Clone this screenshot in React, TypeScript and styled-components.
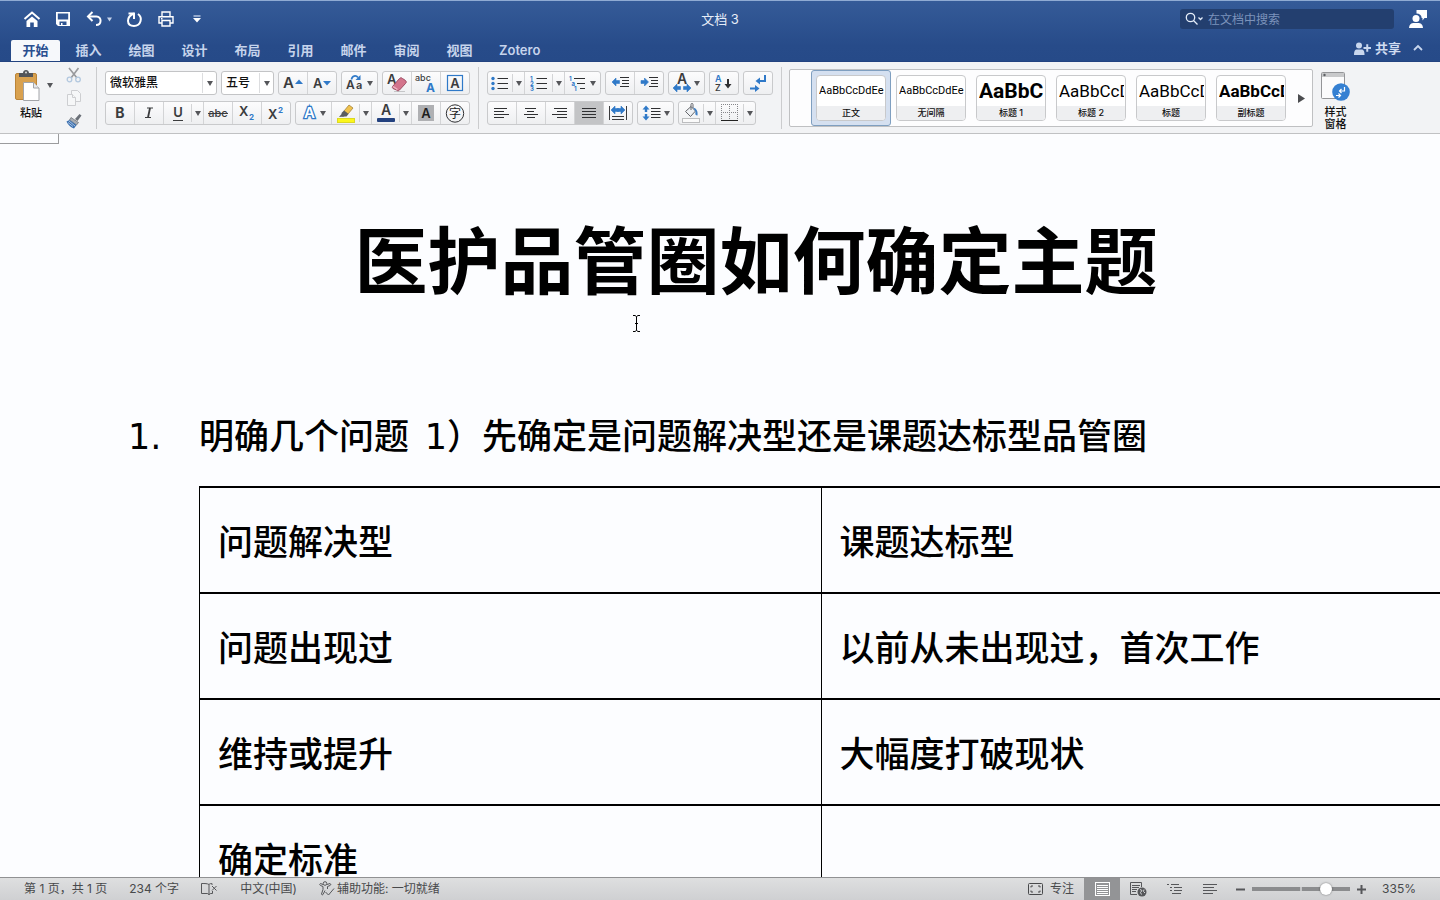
import React from "react";
import styled, { createGlobalStyle } from "styled-components";

const UI = `Inter, "Noto Sans CJK SC", sans-serif`;
const CJK = `"Noto Sans CJK SC", sans-serif`;
const INK = "#3b3c3e";
const BLUE = "#2f79c8";

const GlobalStyle = createGlobalStyle`
  *, *::before, *::after { box-sizing: border-box; }
  body { margin: 0; font-family: ${UI}; }
  button, select, input { font: inherit; color: inherit; margin: 0; padding: 0; }
  button { border: 0; background: none; cursor: pointer; }
  svg { display: block; flex: none; overflow: visible; }
  svg text { font-family: ${UI}; }
`;

const Window = styled.div`
  display: flex;
  flex-direction: column;
  height: 100vh;
  overflow: hidden;
  background: #fcfdff;
`;

/* ---------- Title bar and tabs ---------- */

const Header = styled.header`
  flex: none;
  border-top: 1px solid #8fabd3;
  border-bottom: 1px solid #234380;
  background: linear-gradient(#355b98, #274b89 75%, #264a88);
  color: #e6edf8;
`;

const TitleBar = styled.div`
  display: grid;
  grid-template-columns: 1fr auto 1fr;
  align-items: center;
  height: 38px;
  padding: 0 12px 2px;
`;

const QuickAccess = styled.div`
  display: flex;
  align-items: center;
  padding-left: 10px;
  color: #fff;
`;

const QuickButton = styled.button<{ $gap?: number }>`
  display: flex;
  align-items: center;
  gap: 4px;
  margin-right: ${(p) => p.$gap ?? 11}px;
`;

const DocTitle = styled.div`
  font-size: 13px;
  line-height: 20px;
`;

const TitleRight = styled.div`
  display: flex;
  justify-content: flex-end;
  align-items: center;
  gap: 15px;
`;

const SearchBox = styled.label`
  display: flex;
  align-items: center;
  gap: 4px;
  width: 214px;
  height: 20px;
  padding-left: 5px;
  border-radius: 3px;
  background: #233f6f;
`;

const SearchInput = styled.input`
  flex: 1;
  min-width: 0;
  border: 0;
  outline: 0;
  background: none;
  font-size: 12px;
  &::placeholder { color: #7c93bb; opacity: 1; }
`;

const IconButton = styled.button`
  display: flex;
  align-items: center;
  justify-content: center;
`;

const TabRow = styled.div`
  display: flex;
  justify-content: space-between;
  height: 22px;
  padding: 0 17px 0 11px;
`;

const Tabs = styled.nav`
  display: flex;
  gap: 4px;
  padding-top: 1px;
`;

const Tab = styled.button<{ $active?: boolean }>`
  min-width: 49px;
  padding: 0 11px;
  border-radius: 2px 2px 0 0;
  font-size: 13px;
  font-weight: 600;
  line-height: 19px;
  white-space: nowrap;
  color: ${(p) => (p.$active ? "#2a4f8f" : "#c6d4ec")};
  background: ${(p) => (p.$active ? "#f6f8fb" : "none")};
`;

const ShareArea = styled.div`
  display: flex;
  align-items: center;
  gap: 12px;
  padding-bottom: 4px;
`;

const ShareButton = styled.button`
  display: flex;
  align-items: center;
  gap: 3px;
  font-size: 13px;
  font-weight: 600;
  line-height: 18px;
  color: #d0dcf1;
`;

/* ---------- Ribbon ---------- */

const Ribbon = styled.div`
  display: flex;
  flex: none;
  height: 72px;
  padding: 5px 0 4px;
  border-bottom: 1px solid #c0c1c3;
  background: #f2f3f5;
  color: #111;
`;

const Section = styled.section`
  display: flex;
  flex: none;
  padding: 4px 8px 0;
  border-right: 1px solid #cbccce;
`;

const PasteSection = styled(Section)`
  width: 97px;
  padding: 0 0 0 15px;
`;

const BigButton = styled.button`
  display: flex;
  flex-direction: column;
  align-items: center;
  gap: 4px;
  font-size: 11px;
  font-weight: 500;
  line-height: 12px;
`;

const PasteButton = styled(BigButton)`
  align-items: flex-end;
  width: 32px;
  padding-right: 5px;
  gap: 6px;
`;

const PasteFace = styled.span`
  align-self: flex-start;
`;

const PasteColumn = styled.div`
  display: flex;
  align-items: flex-start;
  padding-top: 3px;
`;

const PasteArrow = styled.button`
  padding-top: 13px;
`;

const SmallTools = styled.div`
  display: flex;
  flex-direction: column;
  justify-content: space-between;
  margin-left: 13px;
`;

const Rows = styled.div`
  display: flex;
  flex-direction: column;
  gap: 6px;
`;

const Row = styled.div`
  display: flex;
  gap: 4px;
`;

const Group = styled.div`
  display: flex;
  height: 24px;
  border: 1px solid #c9cacc;
  border-radius: 3px;
  background: linear-gradient(#fcfcfd, #eeeff1);
`;

const Tool = styled.button<{ $w?: number; $active?: boolean }>`
  display: flex;
  align-items: center;
  justify-content: center;
  gap: 3px;
  width: ${(p) => p.$w ?? 28}px;
  background: ${(p) => (p.$active ? "#c3c4c6" : "none")};
`;

const Divider = styled.span`
  width: 1px;
  background: #d3d4d6;
`;

const SplitDivider = styled(Divider)`
  margin: 2px 0;
`;

const ArrowTool = styled.button`
  display: flex;
  align-items: center;
  justify-content: center;
  width: 11px;
`;

const Combo = styled.div<{ $w: number }>`
  display: flex;
  width: ${(p) => p.$w}px;
  height: 24px;
  border: 1px solid #c3c4c6;
  border-radius: 3px;
  background: #fff;
`;

const ComboSelect = styled.select`
  flex: 1;
  min-width: 0;
  padding: 0 0 2px 4px;
  border: 0;
  outline: 0;
  appearance: none;
  background: none;
  font-size: 12px;
  font-weight: 500;
  color: #111;
`;

const ComboArrow = styled.span`
  display: flex;
  align-items: center;
  justify-content: center;
  width: 14px;
  margin: 1px 0;
  border-left: 1px solid #dcdddf;
`;

/* ---------- Style gallery ---------- */

const GallerySection = styled.section`
  display: flex;
  padding: 2px 0 0 7px;
`;

const Gallery = styled.div`
  display: flex;
  height: 58px;
  padding-left: 21px;
  border: 1px solid #bfc0c2;
  border-radius: 2px;
  background: #fdfdfe;
`;

const StyleCard = styled.button<{ $active?: boolean }>`
  width: 80px;
  height: 56px;
  padding: 4px;
  border: 1px solid ${(p) => (p.$active ? "#7f9fc0" : "transparent")};
  border-radius: 3px;
  background: ${(p) => (p.$active ? "#d5e0f0" : "none")};
`;

const CardFace = styled.span`
  display: flex;
  flex-direction: column;
  height: 46px;
  border: 1px solid #c8c9cb;
  border-radius: 4px;
  background: #fff;
  overflow: hidden;
`;

const Sample = styled.span<{ $size: number; $bold?: boolean }>`
  flex: 1;
  margin: 0 1px 0 2px;
  overflow: hidden;
  text-align: left;
  white-space: nowrap;
  font-family: Roboto, sans-serif;
  font-size: ${(p) => p.$size}px;
  font-weight: ${(p) => (p.$bold ? 700 : 400)};
  line-height: 30px;
  color: #000;
`;

const CardName = styled.span`
  height: 14px;
  background: #eeeff1;
  font-size: 9px;
  font-weight: 500;
  line-height: 13px;
`;

const GalleryNext = styled.button`
  display: flex;
  align-items: center;
  justify-content: center;
  width: 21px;
`;

const PaneButton = styled(BigButton)`
  margin-left: 8px;
  align-self: flex-start;
  padding-top: 2px;
`;

/* ---------- Document ---------- */

const Document = styled.main`
  position: relative;
  flex: 1;
  min-height: 0;
  overflow: hidden;
  padding-left: 72px;
  color: #000;
  font-family: ${CJK};
`;

const PageCorner = styled.div`
  width: 59px;
  height: 10px;
  margin-left: -72px;
  border: solid #9b9c9e;
  border-width: 0 1px 1px 0;
`;

const Heading = styled.h1`
  margin: 62px 0 0;
  text-align: center;
  font-size: 73px;
  font-weight: 700;
  line-height: 100px;
`;

const ListLine = styled.p`
  display: flex;
  height: 60px;
  margin: 98px 0 0;
  padding-left: 56px;
  font-size: 35px;
  font-weight: 500;
  line-height: 60px;
  white-space: pre;
`;

const Numeral = styled.span`
  font-family: "DejaVu Sans", sans-serif;
  font-weight: 400;
  line-height: 1;
`;

const Marker = styled.span`
  width: 71px;
`;

const Table = styled.table`
  width: calc(100% - 124px);
  margin: 22px -4px 0 127px;
  table-layout: fixed;
  border-collapse: collapse;
  font-size: 35px;
  font-weight: 500;
  line-height: 60px;
`;

const Cell = styled.td`
  height: 106px;
  padding: 0 18px;
  border: solid #000;
  border-width: 2px 1px;
`;

const TextCursor = styled.svg`
  position: absolute;
  left: 632px;
  top: 181px;
`;

/* ---------- Status bar ---------- */

const StatusBar = styled.footer`
  display: flex;
  flex: none;
  justify-content: space-between;
  height: 23px;
  padding: 0 24px;
  border-top: 1px solid #909193;
  background: linear-gradient(#dedfe0, #cfd0d2);
  font-size: 12px;
  line-height: 22px;
  color: #48494b;
  white-space: nowrap;
`;

const StatusGroup = styled.div`
  display: flex;
  align-items: center;
`;

const StatusItem = styled.button<{ $gap?: number; $inner?: number }>`
  display: flex;
  align-items: center;
  gap: ${(p) => p.$inner ?? 2}px;
  margin-right: ${(p) => p.$gap ?? 22}px;
`;

const ViewButton = styled.button<{ $active?: boolean }>`
  display: flex;
  align-items: center;
  justify-content: center;
  width: 36px;
  height: 22px;
  background: ${(p) => (p.$active ? "#939496" : "none")};
`;

const ZoomArea = styled.div`
  display: flex;
  align-items: center;
  margin-left: 4px;
`;

const ZoomButton = styled.button`
  display: flex;
  padding: 4px;
`;

const ZoomSlider = styled.input`
  width: 98px;
  height: 14px;
  margin: 0 3px;
  appearance: none;
  background: linear-gradient(90deg, transparent 48px, #c4c5c7 48px 50px, transparent 50px) center / 98px 4px no-repeat,
    linear-gradient(#8b8c8e, #8b8c8e) center / 98px 4px no-repeat;
  &::-webkit-slider-thumb {
    appearance: none;
    width: 12px;
    height: 12px;
    border-radius: 50%;
    background: #fff;
    box-shadow: 0 0 2px rgba(0, 0, 0, 0.5);
  }
`;

const ZoomValue = styled.span`
  margin-left: 12px;
`;

/* ---------- Icons ---------- */

const Down = ({ color = "#55565a", size = 6 }: { color?: string; size?: number }) => (
  <svg width={size} height="5" viewBox="0 0 6 5">
    <path d="M0 0h6L3 5z" fill={color} />
  </svg>
);

const Lines = ({ rows, width = 16 }: { rows: [number, number][]; width?: number }) => (
  <svg width={width} height="14" viewBox={`0 0 ${width} 14`}>
    {rows.map(([x, w], i) => (
      <path key={i} d={`M${x} ${i * 3 + 2}.5h${w}`} stroke="#2f3032" />
    ))}
  </svg>
);

const ArrowL = ({ x, y }: { x: number; y: number }) => (
  <path transform={`translate(${x} ${y})`} d="M0 4l4-4v2.500h3.500v3H4V8z" fill={BLUE} stroke={BLUE} strokeWidth=".6" />
);
const ArrowR = ({ x, y }: { x: number; y: number }) => (
  <path transform={`translate(${x} ${y})`} d="M7.500 4l-4-4v2.500H0v3h3.500V8z" fill={BLUE} stroke={BLUE} strokeWidth=".6" />
);

const HomeIcon = () => (
  <svg width="20" height="18" viewBox="0 0 20 18" fill="none">
    <path d="M2.500 9L10 2.500 17.500 9" stroke="#fff" strokeWidth="2" />
    <path d="M4.500 11L10 6.500l5.500 4.500V17H11.800v-4.500H8.200V17H4.500z" fill="#fff" />
  </svg>
);
const SaveIcon = () => (
  <svg width="16" height="16" viewBox="0 0 16 16">
    <path
      fill="#fff"
      fillRule="evenodd"
      d="M1 1h14v14H3l-2-2zM2.800 2.500v6h10.400v-6zM4.500 10.500V14H6v-2h1.500v2h4v-3.500z"
    />
  </svg>
);
const UndoIcon = () => (
  <svg width="17" height="16" viewBox="0 0 17 16" fill="none" stroke="#fff" strokeWidth="2">
    <path d="M6.500 1L2 5.500 6.500 10" />
    <path d="M2 5.500h8.500c5.500 0 5.500 8.500-.5 8.500" />
  </svg>
);
const RedoIcon = () => (
  <svg width="17" height="17" viewBox="0 0 17 17" fill="none" stroke="#fff" strokeWidth="2">
    <path d="M2.500 2.500H8V8" />
    <path d="M8 2.500C-.500 6 .5 15 8 15c7 0 9-8.500 4-12" />
  </svg>
);
const PrintIcon = () => (
  <svg width="16" height="16" viewBox="0 0 16 16" fill="none" stroke="#fff" strokeWidth="1.400">
    <path d="M4 5.500V1h8v4.500M4 12H1V5.700h14V12h-3" />
    <path d="M4 9.500h8V15H4z" />
    <path d="M3 7.700h1.500" />
  </svg>
);
const CustomizeIcon = () => (
  <svg width="8" height="8" viewBox="0 0 8 8">
    <path d="M.5 1h7" stroke="#d7e1f2" strokeWidth="1.200" />
    <path d="M0 3h8L4 7.500z" fill="#fff" />
  </svg>
);
const SearchIcon = () => (
  <svg width="19" height="14" viewBox="0 0 19 14" fill="none" stroke="#e4ecf8" strokeWidth="1.300">
    <circle cx="5.500" cy="5.500" r="4.200" />
    <path d="M8.500 8.500l4 4M13.500 5.500l2 2 2-2" />
  </svg>
);
const UserIcon = () => (
  <svg width="19" height="19" viewBox="0 0 19 19" fill="#fff">
    <path d="M7.500 0H18v8h-2.500L13.500 10.500V8h-.8C12.500 5 10.500 3.500 7.500 3.500z" />
    <circle cx="7" cy="8.500" r="3.500" />
    <path d="M0 18c.3-4 2.500-5 5-5h4c2.500 0 4.700 1 5 5z" />
  </svg>
);
const ShareIcon = () => (
  <svg width="18" height="14" viewBox="0 0 18 14" fill="#c9d7ee">
    <circle cx="5" cy="4.500" r="3" />
    <path d="M0 14c0-4 1-5.500 3-5.500h4.500c2 0 3 1.500 3 5.500z" />
    <path d="M9.500 7h7.500M13.250 3.200v7.600" stroke="#c9d7ee" strokeWidth="2" />
  </svg>
);
const ChevronUp = () => (
  <svg width="10" height="6" viewBox="0 0 10 6" fill="none" stroke="#c9d7ee" strokeWidth="1.800">
    <path d="M1 5l4-4 4 4" />
  </svg>
);

const PasteIcon = () => (
  <svg width="25" height="31" viewBox="0 0 25 31">
    <rect x=".5" y="3.500" width="21" height="26" rx="1.500" fill="#d9a14f" stroke="#bb8438" />
    <path d="M4 3h4c0-4 6-4 6 0h4v4H4z" fill="#54565a" />
    <circle cx="11" cy="2.500" r="1" fill="#dcdcdc" />
    <path d="M8.500 12.500h10l5.500 5.500v12.500H8.500z" fill="#fff" stroke="#a2a4a8" />
    <path d="M18.500 12.500V18H24" fill="#e8e9eb" stroke="#a2a4a8" />
  </svg>
);
const CutIcon = () => (
  <svg width="16" height="16" viewBox="0 0 16 16" fill="none">
    <path d="M3 1l8 10M12.500 1L5 11" stroke="#98999c" strokeWidth="1.600" />
    <circle cx="3.500" cy="12.500" r="2.300" stroke="#b3c8df" strokeWidth="1.300" />
    <circle cx="12" cy="12.500" r="2.300" stroke="#b3c8df" strokeWidth="1.300" />
  </svg>
);
const CopyIcon = () => (
  <svg width="16" height="16" viewBox="0 0 16 16" fill="#f6f7f8" stroke="#cdced1">
    <path d="M5.500.5h6l3 3v8h-9z" />
    <path d="M1.500 4.500h5l3 3v8h-8z" />
    <path d="M6.500 4.500v3h3" />
  </svg>
);
const BrushIcon = () => (
  <svg width="16" height="16" viewBox="0 0 16 16">
    <path d="M9 6l4.500-5 2 1.500L11.500 8z" fill="#6b7078" />
    <path d="M5 4.500l7.500 5-2 2.500L3.500 7z" fill="#a9adb3" stroke="#565a60" strokeWidth=".6" />
    <path d="M3.500 7l7 5-2.500 3.500C5 14.500 2 12 .5 8.500z" fill="#3a6fb0" />
    <path d="M3 8l6 5M2 9.500l5 4" stroke="#dbe6f3" strokeWidth=".7" />
  </svg>
);

const Glyph = ({
  text, size = 15, weight = 600, w = 16, y = 14, x, color = INK, children,
}: {
  text: string; size?: number; weight?: number; w?: number; y?: number; x?: number;
  color?: string; children?: React.ReactNode;
}) => (
  <svg width={w} height="20" viewBox={`0 0 ${w} 20`}>
    <text
      x={x ?? w / 2}
      y={y}
      textAnchor={x === undefined ? "middle" : "start"}
      fontSize={size}
      fontWeight={weight}
      fill={color}
    >
      {text}
    </text>
    {children}
  </svg>
);

const ItalicIcon = () => (
  <svg width="12" height="20" viewBox="0 0 12 20" fill="none" stroke={INK}>
    <path d="M4 5h6M2 14.500h6" strokeWidth="1.200" />
    <path d="M7 5L5 14.500" strokeWidth="1.800" />
  </svg>
);
const ChangeCaseIcon = () => (
  <svg width="18" height="20" viewBox="0 0 18 20">
    <text x="0" y="16" fontSize="12" fontWeight="600" fill={INK}>A</text>
    <text x="10" y="16" fontSize="11" fontWeight="600" fill={INK}>a</text>
    <path d="M5.500 6.500C6 2.500 10 2 12 4.500" fill="none" stroke={BLUE} strokeWidth="1.800" />
    <path d="M9.500 7h5V2z" fill={BLUE} />
  </svg>
);
const EraserIcon = () => (
  <Glyph text="A" size={13} w={22} x={1} y={11}>
    <path d="M8 18.500h11" stroke="#c5c6c8" />
    <path d="M6.500 13.500l7-8c1-1 2-1 3 0l3 2c1 1 1 2 0 3l-6 6.500c-1 1-2 1-3 0L7 15.500c-.8-.6-.8-1.300-.5-2z" fill="#d3748c" stroke="#9d4d63" />
    <path d="M7 13.500l4.500 3" stroke="#efb6c3" strokeWidth="1.500" />
  </Glyph>
);
const PhoneticIcon = () => (
  <svg width="22" height="20" viewBox="0 0 22 20">
    <text x="0" y="8" fontSize="9" fontWeight="500" fill={INK}>abc</text>
    <text x="11" y="19" fontSize="12" fontWeight="700" fill={BLUE}>A</text>
  </svg>
);
const BorderAIcon = () => (
  <Glyph text="A" size={13} y={15}>
    <rect x=".5" y="2.500" width="15" height="15" fill="none" stroke={BLUE} strokeWidth="1.200" />
  </Glyph>
);
const OutlineAIcon = () => (
  <svg width="15" height="20" viewBox="0 0 15 20">
    <text x="7.500" y="15" textAnchor="middle" fontSize="15" fontWeight="600" fill="#fff" stroke={BLUE} strokeWidth="2.600" paintOrder="stroke">A</text>
  </svg>
);
const HighlightIcon = () => (
  <svg width="20" height="20" viewBox="0 0 20 20">
    <path d="M8 8l5-6 4 3-5 6z" fill="#f0c24d" stroke="#a5843a" strokeWidth=".8" />
    <path d="M5.500 10L8 7.500l4.500 3.500-2 2.500H6z" fill="#5a5c60" />
    <path d="M3 14l2.500-3 3 2.500z" fill="#5a5c60" />
    <rect x="1.500" y="15.500" width="17" height="4" fill="#fbf61c" stroke="#dcd823" />
  </svg>
);
const FontColorIcon = () => (
  <Glyph text="A" size={14} w={18} y={12}>
    <rect x="0" y="15" width="18" height="4" rx="1" fill="#23417f" />
  </Glyph>
);
const ShadedAIcon = () => (
  <svg width="16" height="20" viewBox="0 0 16 20">
    <rect x="0" y="2" width="16" height="16" fill="#afb0b3" />
    <text x="8" y="15" textAnchor="middle" fontSize="13" fontWeight="600" fill="#1d1e20">A</text>
  </svg>
);
const CircledIcon = () => (
  <Glyph text="字" size={12} w={20} weight={400} y={15} color="#202124">
    <circle cx="10" cy="10.500" r="8.700" fill="none" stroke="#303134" />
  </Glyph>
);

const BulletsIcon = () => (
  <svg width="18" height="15" viewBox="0 0 18 15">
    {[2, 7, 12].map((y) => (
      <g key={y}>
        <circle cx="2" cy={y + 0.5} r="1.700" fill={BLUE} />
        <path d={`M6.500 ${y + 0.5}H17`} stroke="#2f3032" />
      </g>
    ))}
  </svg>
);
const NumbersIcon = () => (
  <svg width="18" height="17" viewBox="0 0 18 17">
    {[3, 8, 13].map((y, i) => (
      <g key={y}>
        <text x="0" y={y + 2.500} fontSize="6" fontWeight="700" fill={BLUE}>{i + 1}</text>
        <path d={`M6.500 ${y + 0.5}H17`} stroke="#2f3032" />
      </g>
    ))}
  </svg>
);
const MultiIcon = () => (
  <svg width="18" height="17" viewBox="0 0 18 17">
    {["1", "a", "1"].map((t, i) => (
      <g key={i}>
        <text x={i * 2.500} y={i * 5 + 5.500} fontSize="6" fontWeight="700" fill={BLUE}>{t}</text>
        <path d={`M${i * 3 + 5} ${i * 5 + 3.500}H16`} stroke="#2f3032" />
      </g>
    ))}
  </svg>
);
const IndentIcon = ({ right }: { right?: boolean }) => (
  <svg width="18" height="14" viewBox="0 0 18 14">
    <path d="M9 1.500h9M11 4.500h7M11 7.500h7M9 10.500h9" stroke="#2f3032" />
    {right ? <ArrowR x={1} y={2} /> : <ArrowL x={1} y={2} />}
  </svg>
);
const AsianIcon = () => (
  <Glyph text="A" size={14} w={18} y={11}>
    <ArrowL x={0} y={11} />
    <ArrowR x={10.500} y={11} />
  </Glyph>
);
const SortIcon = () => (
  <svg width="18" height="20" viewBox="0 0 18 20">
    <text x="0" y="9" fontSize="9" fontWeight="600" fill={BLUE}>A</text>
    <text x="0" y="18" fontSize="9" fontWeight="500" fill={INK}>Z</text>
    <path d="M12 6h2v5h2.500L13 15.500 9.500 11H12z" fill="#2f3032" />
  </svg>
);
const MarksIcon = () => (
  <svg width="18" height="20" viewBox="0 0 18 20">
    <path d="M16 2v6H10" fill="none" stroke={BLUE} strokeWidth="2" />
    <path d="M6.500 8L11 4.500v7z" fill={BLUE} />
    <path d="M1 15.500h6" stroke={BLUE} strokeWidth="2" />
    <path d="M10.500 15.500L6 12v7z" fill={BLUE} />
  </svg>
);
const DistributeIcon = () => (
  <svg width="20" height="18" viewBox="0 0 20 18">
    <path d="M1.500 2v14M18.500 2v14M4 12.500h12M4 15.500h12" stroke="#3a3b3d" />
    <ArrowL x={3} y={2} />
    <ArrowR x={9.500} y={2} />
  </svg>
);
const SpacingIcon = () => (
  <svg width="19" height="16" viewBox="0 0 19 16">
    <path d="M9 3.500h9.500M9 6.500h9.500M9 9.500h9.500M9 12.500h9.500" stroke="#2f3032" />
    <path d="M4 .500L7.500 4.500H5.200V7H2.800V4.500H.500zM4 15.500L.500 11.500h2.300V9h2.400v2.500h2.300z" fill={BLUE} />
  </svg>
);
const BucketIcon = () => (
  <svg width="18" height="20" viewBox="0 0 18 20">
    <path d="M3.500 8.500L9 3.500l4.500 4.500-5 5.500z" fill="#eef0f3" stroke="#64676c" />
    <path d="M9 7V1.500c0-1.500 2-1.500 2 0V5" fill="none" stroke="#64676c" />
    <path d="M11 4.500c4 1 5 4 4.500 8-2 0-2.500-1-2-4z" fill="#3f7fc4" />
    <rect x=".5" y="15.500" width="17" height="4" fill="#fafafa" stroke="#bcbdbf" />
  </svg>
);
const TableBorderIcon = () => (
  <svg width="18" height="18" viewBox="0 0 18 18" fill="none">
    <path d="M0 .5h17M0 8.500h17M.5 0v16M8.500 0v16M16.500 0v16" stroke="#85868a" strokeDasharray="1 1" />
    <path d="M0 16.500h17" stroke="#222" />
  </svg>
);
const PaneIcon = () => (
  <svg width="29" height="31" viewBox="0 0 29 31">
    <rect x=".5" y="1.500" width="23" height="26" rx="1" fill="#fbfbfc" stroke="#949598" />
    <rect x="1" y="2" width="22" height="4" fill="#c8c9cb" />
    <circle cx="3.500" cy="4" r="1.200" fill="#5d5f63" />
    <circle cx="20" cy="21" r="8.800" fill="#3580d2" />
    <path d="M23.500 16v4H18.500M20.500 18L18.500 20l2 2M15 24.500h4.500M17.500 22.500l2 2-2 2" fill="none" stroke="#fff" strokeWidth="1.200" />
  </svg>
);

const ProofIcon = () => (
  <svg width="17" height="14" viewBox="0 0 17 14" fill="none" stroke="#56575a">
    <path d="M8 2.500C6.500 1.500 4 1.500.5 1.500v10H6c1 0 2 .5 2 1.500zM8 2.500C9 1.500 10 1.500 11 1.500V3M8 13c0-1 1-1.500 2-1.500h1.500V9" />
    <path d="M11 4l4.500 4.500M15.500 4L11 8.500" />
  </svg>
);
const AccessIcon = () => (
  <svg width="16" height="16" viewBox="0 0 16 16" fill="none" stroke="#56575a">
    <circle cx="6" cy="2.500" r="1.800" />
    <path d="M4 3.500L1.500 2.500C.5 3 .5 4 1.500 4.500L4 5.500v3L2.500 13c.3 1.300 1.500 1 1.800 0L6 9.500M8 3.500l3-1c1 .5 1 1.500 0 2L8.500 5.500V8" />
    <path d="M6.500 11l3 3 5.500-6.500" />
  </svg>
);
const FocusIcon = () => (
  <svg width="15" height="12" viewBox="0 0 15 12" fill="none" stroke="#48494b">
    <rect x=".5" y=".5" width="14" height="11" rx="1" />
    <path d="M3 4.500V3h2M10 3h2v1.500M3 7.500V9h2M10 9h2V7.500" />
  </svg>
);
const PrintLayoutIcon = () => (
  <svg width="15" height="14" viewBox="0 0 15 14" fill="none" stroke="#fff">
    <rect x=".5" y=".5" width="14" height="13" />
    <path d="M2 3.500h11M2 5.500h11M2 7.500h11M2 9.500h11M2 11.500h11" />
  </svg>
);
const WebLayoutIcon = () => (
  <svg width="17" height="15" viewBox="0 0 17 15" fill="none" stroke="#56575a">
    <path d="M7 12.500H.5V.5h11V5M2 3.500h8M2 5.500h7M2 7.500h5M2 9.500h4" />
    <circle cx="12" cy="10" r="4.500" fill="#56575a" stroke="none" />
    <path d="M10 7.500l2 1-1.500 2 1 2M14 7.500l-.5 2 1.500 1.500" stroke="#d6d7d9" />
  </svg>
);
const OutlineIcon = () => (
  <svg width="15" height="12" viewBox="0 0 15 12" stroke="#56575a">
    <path d="M0 1.500h2M4 1.500h8M3 4.500h2M7 4.500h8M3 7.500h2M7 7.500h8M5 10.500h9" />
  </svg>
);
const DraftIcon = () => (
  <svg width="14" height="12" viewBox="0 0 14 12" stroke="#56575a">
    <path d="M0 1.500h14M0 4.500h11M0 7.500h14M0 10.500h10" />
  </svg>
);

/* ---------- Composite controls ---------- */

const SplitTool = ({ label, w, children }: { label: string; w: number; children: React.ReactNode }) => (
  <>
    <Tool $w={w} aria-label={label}>{children}</Tool>
    <SplitDivider />
    <ArrowTool aria-label={`${label}选项`}><Down /></ArrowTool>
  </>
);

const ComboBox = ({ label, w, value }: { label: string; w: number; value: string }) => (
  <Combo $w={w}>
    <ComboSelect aria-label={label} defaultValue={value}>
      <option>{value}</option>
    </ComboSelect>
    <ComboArrow><Down /></ComboArrow>
  </Combo>
);

const tabs = ["开始", "插入", "绘图", "设计", "布局", "引用", "邮件", "审阅", "视图", "Zotero"];

const styles = [
  { name: "正文", sample: "AaBbCcDdEe", size: 11 },
  { name: "无间隔", sample: "AaBbCcDdEe", size: 11 },
  { name: "标题 1", sample: "AaBbC", size: 21, bold: true },
  { name: "标题 2", sample: "AaBbCcD", size: 17 },
  { name: "标题", sample: "AaBbCcD", size: 17 },
  { name: "副标题", sample: "AaBbCcD", size: 17, bold: true },
];

const rows = [
  ["问题解决型", "课题达标型"],
  ["问题出现过", "以前从未出现过，首次工作"],
  ["维持或提升", "大幅度打破现状"],
  ["确定标准", ""],
];

export default function App() {
  return (
    <Window>
      <GlobalStyle />
      <Header>
        <TitleBar>
          <QuickAccess>
            <QuickButton aria-label="主页" $gap={13}><HomeIcon /></QuickButton>
            <QuickButton aria-label="保存" $gap={15}><SaveIcon /></QuickButton>
            <QuickButton aria-label="撤消" $gap={14}><UndoIcon /><Down color="#c6d3ea" size={5} /></QuickButton>
            <QuickButton aria-label="恢复" $gap={15}><RedoIcon /></QuickButton>
            <QuickButton aria-label="打印" $gap={19}><PrintIcon /></QuickButton>
            <QuickButton aria-label="自定义工具栏"><CustomizeIcon /></QuickButton>
          </QuickAccess>
          <DocTitle>文档 3</DocTitle>
          <TitleRight>
            <SearchBox>
              <SearchIcon />
              <SearchInput aria-label="搜索" placeholder="在文档中搜索" />
            </SearchBox>
            <IconButton aria-label="账户"><UserIcon /></IconButton>
          </TitleRight>
        </TitleBar>
        <TabRow>
          <Tabs>
            {tabs.map((t, i) => (
              <Tab key={t} $active={i === 0}>{t}</Tab>
            ))}
          </Tabs>
          <ShareArea>
            <ShareButton><ShareIcon />共享</ShareButton>
            <IconButton aria-label="折叠功能区"><ChevronUp /></IconButton>
          </ShareArea>
        </TabRow>
      </Header>

      <Ribbon>
        <PasteSection>
          <PasteColumn>
            <PasteButton><PasteFace><PasteIcon /></PasteFace>粘贴</PasteButton>
            <PasteArrow aria-label="粘贴选项"><Down /></PasteArrow>
          </PasteColumn>
          <SmallTools>
            <IconButton aria-label="剪切"><CutIcon /></IconButton>
            <IconButton aria-label="复制"><CopyIcon /></IconButton>
            <IconButton aria-label="格式刷"><BrushIcon /></IconButton>
          </SmallTools>
        </PasteSection>

        <Section>
          <Rows>
            <Row>
              <ComboBox label="字体" w={112} value="微软雅黑" />
              <ComboBox label="字号" w={53} value="五号" />
              <Group>
                <Tool aria-label="增大字号">
                  <Glyph text="A" size={15} w={20} x={0} y={15}><path d="M12 11h8l-4-4.500z" fill={BLUE} /></Glyph>
                </Tool>
                <Divider />
                <Tool aria-label="减小字号">
                  <Glyph text="A" size={13} w={18} x={0} y={15}><path d="M10 8h8l-4 4.500z" fill={BLUE} /></Glyph>
                </Tool>
              </Group>
              <Group>
                <Tool $w={35} aria-label="更改大小写"><ChangeCaseIcon /><Down /></Tool>
              </Group>
              <Group>
                <Tool aria-label="清除格式"><EraserIcon /></Tool>
                <Divider />
                <Tool aria-label="拼音指南"><PhoneticIcon /></Tool>
                <Divider />
                <Tool aria-label="字符边框"><BorderAIcon /></Tool>
              </Group>
            </Row>
            <Row>
              <Group>
                <Tool aria-label="加粗"><Glyph text="B" size={14} weight={700} y={15} /></Tool>
                <Divider />
                <Tool aria-label="倾斜"><ItalicIcon /></Tool>
                <Divider />
                <SplitTool label="下划线" w={27}>
                  <Glyph text="U" size={13} y={14}><path d="M3 17.500h10" stroke={INK} /></Glyph>
                </SplitTool>
                <Divider />
                <Tool aria-label="删除线">
                  <Glyph text="abc" size={11} weight={500} w={22} y={14}><path d="M1 10.500h20" stroke={INK} /></Glyph>
                </Tool>
                <Divider />
                <Tool aria-label="下标">
                  <Glyph text="X" size={13} w={18} x={1} y={13}>
                    <text x="11" y="17" fontSize="8" fontWeight="700" fill={BLUE}>2</text>
                  </Glyph>
                </Tool>
                <Divider />
                <Tool aria-label="上标">
                  <Glyph text="X" size={13} w={18} x={1} y={16}>
                    <text x="11" y="10" fontSize="8" fontWeight="700" fill={BLUE}>2</text>
                  </Glyph>
                </Tool>
              </Group>
              <Group>
                <Tool $w={35} aria-label="文本效果"><OutlineAIcon /><Down /></Tool>
                <Divider />
                <SplitTool label="突出显示" w={27}><HighlightIcon /></SplitTool>
                <Divider />
                <SplitTool label="字体颜色" w={27}><FontColorIcon /></SplitTool>
                <Divider />
                <Tool aria-label="字符底纹"><ShadedAIcon /></Tool>
                <Divider />
                <Tool aria-label="带圈字符"><CircledIcon /></Tool>
              </Group>
            </Row>
          </Rows>
        </Section>

        <Section>
          <Rows>
            <Row>
              <Group>
                <SplitTool label="项目符号" w={24}><BulletsIcon /></SplitTool>
                <Divider />
                <SplitTool label="编号" w={27}><NumbersIcon /></SplitTool>
                <Divider />
                <Tool $w={35} aria-label="多级列表"><MultiIcon /><Down /></Tool>
              </Group>
              <Group>
                <Tool aria-label="减少缩进"><IndentIcon /></Tool>
                <Divider />
                <Tool aria-label="增加缩进"><IndentIcon right /></Tool>
              </Group>
              <Group>
                <Tool $w={35} aria-label="中文版式"><AsianIcon /><Down /></Tool>
              </Group>
              <Group><Tool aria-label="排序"><SortIcon /></Tool></Group>
              <Group><Tool aria-label="显示编辑标记"><MarksIcon /></Tool></Group>
            </Row>
            <Row>
              <Group>
                <Tool aria-label="左对齐"><Lines rows={[[0, 13], [0, 10], [0, 15], [0, 10]]} /></Tool>
                <Divider />
                <Tool aria-label="居中"><Lines rows={[[2, 11], [4, 7], [1, 14], [4, 8]]} /></Tool>
                <Divider />
                <Tool aria-label="右对齐"><Lines rows={[[2, 13], [5, 10], [0, 15], [5, 10]]} /></Tool>
                <Divider />
                <Tool $active aria-label="两端对齐"><Lines rows={[[1, 14], [1, 14], [1, 14], [1, 14]]} /></Tool>
                <Divider />
                <Tool aria-label="分散对齐"><DistributeIcon /></Tool>
              </Group>
              <Group>
                <Tool $w={35} aria-label="行距"><SpacingIcon /><Down /></Tool>
              </Group>
              <Group>
                <SplitTool label="底纹" w={24}><BucketIcon /></SplitTool>
                <Divider />
                <SplitTool label="边框" w={27}><TableBorderIcon /></SplitTool>
              </Group>
            </Row>
          </Rows>
        </Section>

        <GallerySection>
          <Gallery>
            {styles.map((s, i) => (
              <StyleCard key={s.name} $active={i === 0}>
                <CardFace>
                  <Sample $size={s.size} $bold={s.bold}>{s.sample}</Sample>
                  <CardName>{s.name}</CardName>
                </CardFace>
              </StyleCard>
            ))}
            <GalleryNext aria-label="更多样式">
              <svg width="7" height="9" viewBox="0 0 7 9"><path d="M0 0l7 4.500L0 9z" fill="#4c4d50" /></svg>
            </GalleryNext>
          </Gallery>
          <PaneButton><PaneIcon /><span>样式<br />窗格</span></PaneButton>
        </GallerySection>
      </Ribbon>

      <Document>
        <PageCorner />
        <Heading>医护品管圈如何确定主题</Heading>
        <ListLine>
          <Marker><Numeral>1.</Numeral></Marker>
          <span>明确几个问题{"  "}<Numeral>1</Numeral>）先确定是问题解决型还是课题达标型品管圈</span>
        </ListLine>
        <Table>
          <tbody>
            {rows.map(([a, b]) => (
              <tr key={a}>
                <Cell>{a}</Cell>
                <Cell>{b}</Cell>
              </tr>
            ))}
          </tbody>
        </Table>
        <TextCursor width="9" height="17" viewBox="0 0 9 17" fill="none" stroke="#000">
          <path d="M1 .5h2l1.500 1 1.500-1h2M4.500 1.500v14M1 16.500h2l1.500-1 1.500 1h2M3 8.500h3" />
        </TextCursor>
      </Document>

      <StatusBar>
        <StatusGroup>
          <StatusItem>第 1 页，共 1 页</StatusItem>
          <StatusItem>234 个字</StatusItem>
          <StatusItem aria-label="校对"><ProofIcon /></StatusItem>
          <StatusItem>中文(中国)</StatusItem>
          <StatusItem><AccessIcon />辅助功能: 一切就绪</StatusItem>
        </StatusGroup>
        <StatusGroup>
          <StatusItem $gap={10} $inner={7}><FocusIcon />专注</StatusItem>
          <ViewButton $active aria-label="页面视图"><PrintLayoutIcon /></ViewButton>
          <ViewButton aria-label="Web 版式"><WebLayoutIcon /></ViewButton>
          <ViewButton aria-label="大纲"><OutlineIcon /></ViewButton>
          <ViewButton aria-label="草稿"><DraftIcon /></ViewButton>
          <ZoomArea>
            <ZoomButton aria-label="缩小">
              <svg width="9" height="9" viewBox="0 0 9 9"><path d="M0 4.500h9" stroke="#56575a" strokeWidth="2" /></svg>
            </ZoomButton>
            <ZoomSlider type="range" aria-label="缩放" min={0} max={100} defaultValue={79} />
            <ZoomButton aria-label="放大">
              <svg width="9" height="9" viewBox="0 0 9 9"><path d="M0 4.500h9M4.500 0v9" stroke="#56575a" strokeWidth="2" /></svg>
            </ZoomButton>
            <ZoomValue>335%</ZoomValue>
          </ZoomArea>
        </StatusGroup>
      </StatusBar>
    </Window>
  );
}
